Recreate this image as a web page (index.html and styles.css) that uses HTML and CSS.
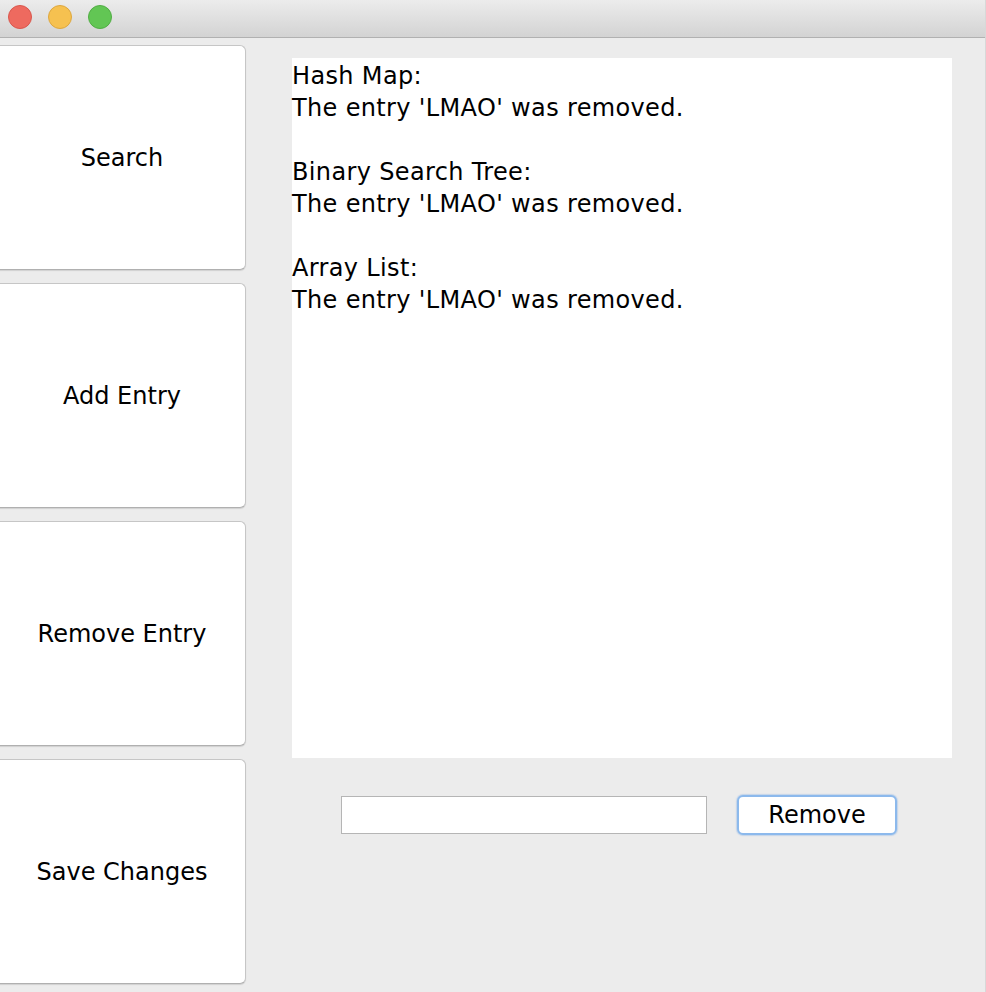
FILE: index.html
```html
<!DOCTYPE html>
<html>
<head>
<meta charset="utf-8">
<link rel="stylesheet" href="styles.css">
</head>
<body>
<div class="window">
  <div class="titlebar">
    <span class="light red"></span>
    <span class="light yellow"></span>
    <span class="light green"></span>
  </div>
  <div class="content">
    <div class="sidebar">
      <button class="side-btn">Search</button>
      <button class="side-btn">Add Entry</button>
      <button class="side-btn">Remove Entry</button>
      <button class="side-btn">Save Changes</button>
    </div>
    <div class="main">
      <div class="output">Hash Map:
The entry 'LMAO' was removed.

Binary Search Tree:
The entry 'LMAO' was removed.

Array List:
The entry 'LMAO' was removed.</div>
      <div class="controls">
        <input class="field" type="text">
        <button class="action">Remove</button>
      </div>
    </div>
  </div>
</div>
</body>
</html>
```

FILE: styles.css
```css
html, body {
  margin: 0;
  padding: 0;
  background: #ececec;
  font-family: "DejaVu Sans", "Lucida Grande", sans-serif;
  color: #000;
  overflow: hidden;
}
.window {
  width: 986px;
  height: 992px;
  display: flex;
  flex-direction: column;
  border-right: 1px solid #d8d8d8;
  box-sizing: border-box;
}
.titlebar {
  height: 38px;
  box-sizing: border-box;
  background: linear-gradient(#ececec, #d3d3d3);
  border-bottom: 1px solid #b1b1b1;
  display: flex;
  align-items: center;
  padding-left: 8px;
  gap: 16px;
  padding-bottom: 4px;
}
.light {
  width: 24px;
  height: 24px;
  border-radius: 50%;
  box-sizing: border-box;
}
.red { background: #ee6a5f; border: 1px solid #d9574d; }
.yellow { background: #f6c150; border: 1px solid #dda73f; }
.green { background: #62c654; border: 1px solid #51ad44; }
.content {
  display: flex;
  flex: 1;
}
.sidebar {
  display: flex;
  flex-direction: column;
  gap: 13px;
  padding-top: 7px;
  margin-left: -6px;
}
.side-btn {
  width: 252px;
  height: 225px;
  background: #fff;
  border: 1px solid #c6c6c6;
  border-bottom-color: #b0b0b0;
  border-radius: 6px;
  box-shadow: 0 1px 1px rgba(0,0,0,0.12);
  font-family: "DejaVu Sans", "Lucida Grande", sans-serif;
  font-size: 24px;
  color: #000;
  padding: 0 0 0 4px;
}
.main {
  margin-left: 46px;
  padding-top: 20px;
  display: flex;
  flex-direction: column;
}
.output {
  width: 660px;
  height: 700px;
  box-sizing: border-box;
  padding-top: 2px;
  background: #fff;
  white-space: pre;
  font-size: 24px;
  letter-spacing: 0.35px;
  line-height: 32px;
}
.controls {
  display: flex;
  align-items: center;
  margin-top: 37px;
  padding-left: 49px;
}
.field {
  width: 366px;
  height: 38px;
  box-sizing: border-box;
  border: 1px solid #b5b5b5;
  background: #fff;
  margin: 0;
  padding: 0;
}
.action {
  margin-left: 30px;
  width: 160px;
  height: 40px;
  box-sizing: border-box;
  background: #fff;
  border: 2px solid #8cb9ec;
  box-shadow: 0 0 1px 1px rgba(120,170,230,0.35);
  border-radius: 6px;
  font-family: "DejaVu Sans", "Lucida Grande", sans-serif;
  font-size: 24px;
  color: #000;
  padding: 0;
}
```
